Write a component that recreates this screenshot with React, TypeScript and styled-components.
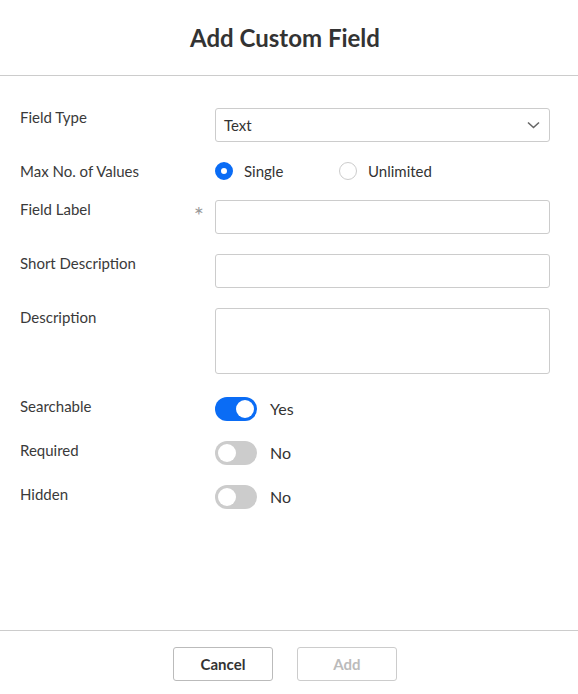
import styled, { createGlobalStyle } from 'styled-components'

const GlobalStyle = createGlobalStyle`
    html, body, #root {
        margin: 0;
        padding: 0;
        height: 100%;
        background: #ffffff;
    }
    body {
        font-family: Lato, 'Noto Sans', sans-serif;
        color: #333333;
    }
`

const Toggle = ({ on, text }: { on: boolean; text: string }) => (
    <ToggleWrap>
        <Track $on={on}>
            <Knob />
        </Track>
        <ToggleText>{text}</ToggleText>
    </ToggleWrap>
)

const Radio = ({ checked, text }: { checked: boolean; text: string }) => (
    <RadioOption>
        <RadioDot $checked={checked} />
        <OptionText>{text}</OptionText>
    </RadioOption>
)

export default function App() {
    return (
        <>
            <GlobalStyle />
            <Dialog>
                <Header>
                    <Title>Add Custom Field</Title>
                </Header>

                <Body>
                    <Row>
                        <Label>Field Type</Label>
                        <Select>
                            <span>Text</span>
                            <svg width="13" height="8" viewBox="0 0 13 8">
                                <path d="M1 1.5l5.5 5 5.5-5" fill="none" stroke="#666" strokeWidth="1.6" />
                            </svg>
                        </Select>
                    </Row>

                    <Row>
                        <Label>Max No. of Values</Label>
                        <RadioGroup>
                            <Radio checked text="Single" />
                            <Radio checked={false} text="Unlimited" />
                        </RadioGroup>
                    </Row>

                    <Row>
                        <Label>
                            Field Label
                            <Asterisk>*</Asterisk>
                        </Label>
                        <TextBox />
                    </Row>

                    <Row>
                        <Label>Short Description</Label>
                        <TextBox />
                    </Row>

                    <Row>
                        <Label>Description</Label>
                        <TextBox $tall />
                    </Row>

                    <ToggleList>
                        <Row>
                            <Label>Searchable</Label>
                            <Toggle on text="Yes" />
                        </Row>
                        <Row>
                            <Label>Required</Label>
                            <Toggle on={false} text="No" />
                        </Row>
                        <Row>
                            <Label>Hidden</Label>
                            <Toggle on={false} text="No" />
                        </Row>
                    </ToggleList>
                </Body>

                <Footer>
                    <Button>Cancel</Button>
                    <Button disabled>Add</Button>
                </Footer>
            </Dialog>
        </>
    )
}

const Dialog = styled.div`
    display: flex;
    flex-direction: column;
    height: 100vh;
`

const Header = styled.div`
    display: flex;
    justify-content: center;
    align-items: center;
    height: 75px;
    padding-right: 8px;
    border-bottom: 1px solid #cccccc;
`

const Title = styled.h1`
    margin: 0;
    font-size: 24px;
    font-weight: 700;
    color: #333333;
`

const Body = styled.div`
    flex: 1;
    display: flex;
    flex-direction: column;
    gap: 20px;
    padding: 32px 28px 0 20px;
`

const Row = styled.div`
    display: flex;
    align-items: flex-start;
`

const Label = styled.div`
    position: relative;
    width: 195px;
    flex-shrink: 0;
    font-size: 15px;
    line-height: 18px;
    color: #3a3a3a;
`

const Asterisk = styled.span`
    position: absolute;
    right: 11px;
    top: 3px;
    color: #999999;
    font-size: 24px;
    line-height: 24px;
`

const Select = styled.div`
    flex: 1;
    height: 34px;
    box-sizing: border-box;
    border: 1px solid #cccccc;
    border-radius: 3px;
    display: flex;
    align-items: center;
    justify-content: space-between;
    padding: 0 9px 0 8px;
    font-size: 15px;
    color: #333333;
`

const TextBox = styled.div<{ $tall?: boolean }>`
    flex: 1;
    height: ${({ $tall }) => ($tall ? '66px' : '34px')};
    box-sizing: border-box;
    border: 1px solid #cccccc;
    border-radius: 3px;
`

const RadioGroup = styled.div`
    display: flex;
    height: 18px;
`

const RadioOption = styled.div`
    display: flex;
    align-items: center;
    gap: 11px;
    width: 124px;
`

const RadioDot = styled.span<{ $checked: boolean }>`
    width: 18px;
    height: 18px;
    box-sizing: border-box;
    border-radius: 50%;
    border: ${({ $checked }) => ($checked ? '6px solid #0a6cf5' : '1px solid #cccccc')};
    background: #ffffff;
`

const OptionText = styled.span`
    font-size: 15px;
    color: #333333;
`

const ToggleList = styled.div`
    display: flex;
    flex-direction: column;
    gap: 20px;
    margin-top: 3px;
`

const ToggleWrap = styled.div`
    display: flex;
    align-items: center;
    gap: 13px;
`

const Track = styled.div<{ $on: boolean }>`
    width: 42px;
    height: 24px;
    box-sizing: border-box;
    border-radius: 12px;
    padding: 3px;
    display: flex;
    justify-content: ${({ $on }) => ($on ? 'flex-end' : 'flex-start')};
    background: ${({ $on }) => ($on ? '#0a6cf5' : '#cccccc')};
`

const Knob = styled.span`
    width: 18px;
    height: 18px;
    border-radius: 50%;
    background: #ffffff;
`

const ToggleText = styled.span`
    font-size: 16px;
    line-height: 18px;
    color: #333333;
`

const Footer = styled.div`
    display: flex;
    justify-content: center;
    gap: 24px;
    height: 64px;
    padding: 16px 8px 0 0;
    box-sizing: border-box;
    border-top: 1px solid #cccccc;
`

const Button = styled.button`
    width: 100px;
    height: 34px;
    border: 1px solid #bbbbbb;
    border-radius: 3px;
    background: #ffffff;
    font-family: Lato, 'Noto Sans', sans-serif;
    font-size: 15px;
    font-weight: 700;
    color: #333333;
    cursor: pointer;

    &:disabled {
        border-color: #cccccc;
        color: #bbbbbb;
        cursor: default;
    }
`
